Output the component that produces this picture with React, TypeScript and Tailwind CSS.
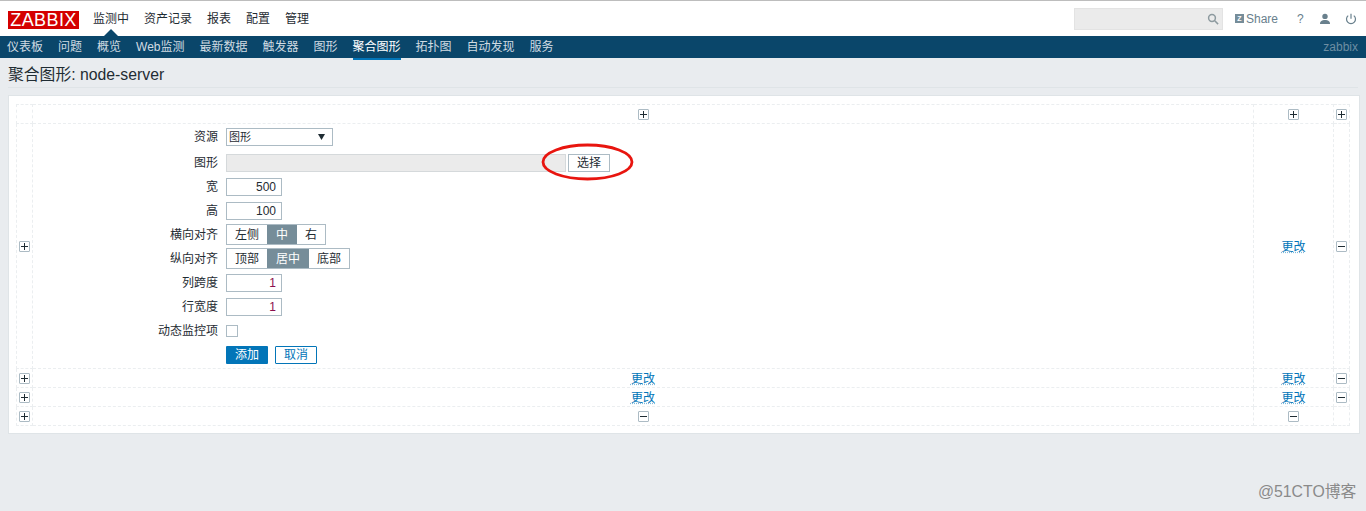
import React from "react";

const font = { fontFamily: '"Liberation Sans","Noto Sans CJK SC",sans-serif' };

function Box({ minus }: { minus?: boolean }) {
  return (
    <span className="inline-flex w-[11px] h-[11px] border border-[#acbbc4] bg-white rounded-[1px] items-center justify-center align-middle relative">
      <span className="block w-[7px] h-[1px] bg-[#1f2c33]" />
      {!minus && <span className="block absolute w-[1px] h-[7px] bg-[#1f2c33]" />}
    </span>
  );
}

const cellB = "border border-dashed border-[#ebeef0] p-0 leading-[14px]";

function Link() {
  return <a className="text-[#0275b8] text-[12px] leading-[14px] underline decoration-dotted decoration-[#0275b880] underline-offset-1">更改</a>;
}

function Row({ label, children, cls }: { label: string; children: React.ReactNode; cls: string }) {
  return (
    <div className={`flex items-center ${cls}`}>
      <div className="w-[193px] pr-[8px] text-right text-[12px] text-[#1f2c33]">{label}</div>
      {children}
    </div>
  );
}

function NumInput({ v, accent }: { v: string; accent?: boolean }) {
  return (
    <div className={`w-[56px] h-[18px] border border-[#acbbc4] bg-white text-right pr-[5px] text-[12px] leading-[16px] ${accent ? "text-[#8b0f4e]" : "text-[#1f2c33]"}`}>
      {v}
    </div>
  );
}

function Seg({ items, widths }: { items: string[]; widths: string[] }) {
  return (
    <div className="flex h-[21px] border border-[#acbbc4] box-border">
      {items.map((t, i) => (
        <div
          key={t}
          className={`${widths[i]} flex items-center justify-center text-[12px] ${i === 1 ? "bg-[#768d99] text-white" : "bg-white text-[#1f2c33]"}`}
        >
          {t}
        </div>
      ))}
    </div>
  );
}

function Form() {
  return (
    <div className="pt-[4px] pb-[4px] relative">
      <Row label="资源" cls="h-[18px]">
        <div className="w-[107px] h-[18px] border border-[#acbbc4] bg-white flex items-center justify-between pl-[2px] pr-[5px] text-[11px] text-[#1f2c33]">
          <span>图形</span>
          <svg width="8" height="6" viewBox="0 0 8 6" className="mr-[1px]"><path d="M0 0h7L3.5 6z" fill="#1f2c33" /></svg>
        </div>
      </Row>
      <Row label="图形" cls="h-[18px] mt-[8px]">
        <div className="w-[340px] h-[18px] border border-[#d5d9db] bg-[#ebebeb]" />
        <div className="ml-[2px] w-[42px] h-[18px] border border-[#acbbc4] bg-white flex items-center justify-center text-[12px] text-[#1f2c33]">选择</div>
      </Row>
      <Row label="宽" cls="h-[18px] mt-[6px]"><NumInput v="500" /></Row>
      <Row label="高" cls="h-[18px] mt-[6px]"><NumInput v="100" /></Row>
      <Row label="横向对齐" cls="h-[21px] mt-[4px]">
        <Seg items={["左侧", "中", "右"]} widths={["w-[40px]", "w-[30px]", "w-[28px]"]} />
      </Row>
      <Row label="纵向对齐" cls="h-[21px] mt-[3px]">
        <Seg items={["顶部", "居中", "底部"]} widths={["w-[40px]", "w-[42px]", "w-[40px]"]} />
      </Row>
      <Row label="列跨度" cls="h-[18px] mt-[5px]"><NumInput v="1" accent /></Row>
      <Row label="行宽度" cls="h-[18px] mt-[6px]"><NumInput v="1" accent /></Row>
      <Row label="动态监控项" cls="h-[12px] mt-[9px]">
        <div className="w-[12px] h-[12px] border border-[#acbbc4] bg-white" />
      </Row>
      <Row label="" cls="h-[18px] mt-[9px]">
        <div className="w-[42px] h-[18px] bg-[#0275b8] text-white text-[12px] flex items-center justify-center rounded-[1px]">添加</div>
        <div className="ml-[7px] w-[42px] h-[18px] border border-[#0275b8] bg-white text-[#0275b8] text-[12px] flex items-center justify-center rounded-[1px]">取消</div>
      </Row>
      <svg className="absolute left-[508px] top-[19px] pointer-events-none" width="94" height="40" viewBox="0 0 94 40">
        <ellipse cx="46.5" cy="19" rx="44.5" ry="17" fill="none" stroke="#e8150f" strokeWidth="2.8" />
      </svg>
    </div>
  );
}

const top = ["监测中", "资产记录", "报表", "配置", "管理"];
const sub = ["仪表板", "问题", "概览", "Web监测", "最新数据", "触发器", "图形", "聚合图形", "拓扑图", "自动发现", "服务"];

export default function App() {
  return (
    <div className="h-[511px] bg-[#e9ecef] overflow-hidden" style={font}>
      <header className="h-[36px] bg-white border-t border-[#bdbdbd] flex items-center">
        <div className="ml-[8px] mt-[2px] w-[71px] h-[18px] bg-[#d40000] text-white text-[18px] leading-[18px] tracking-[0.4px] text-center">ZABBIX</div>
        <nav className="ml-[14px] flex gap-[15px] text-[12px] text-[#1f2c33] relative">
          {top.map((t) => <span key={t}>{t}</span>)}
          <span className="absolute left-[11px] top-[19px] w-0 h-0 border-l-[7px] border-r-[7px] border-b-[7px] border-l-transparent border-r-transparent border-b-[#0a466a]" />
        </nav>
        <div className="ml-auto flex items-center">
          <div className="w-[149px] h-[22px] bg-[#ebebeb] border border-[#e3e3e3] flex items-center justify-end pr-[3px]">
            <svg width="12" height="12" viewBox="0 0 12 12" fill="none" stroke="#8d9a9f" strokeWidth="1.5"><circle cx="5" cy="5" r="3.4" /><path d="M7.5 7.5l3.6 3.6" /></svg>
          </div>
          <div className="ml-[12px] w-[9px] h-[9px] bg-[#768d99] text-white text-[7px] font-bold leading-[9px] text-center">Z</div>
          <span className="ml-[2px] text-[12px] text-[#69808d]">Share</span>
          <span className="ml-[19px] text-[12px] text-[#69808d] w-[7px]">?</span>
          <svg className="ml-[15px]" width="12" height="12" viewBox="0 0 12 12" fill="#69808d"><circle cx="6" cy="3.4" r="2.7" /><path d="M1 11c0-3 2-4 5-4s5 1 5 4z" /></svg>
          <svg className="ml-[14px] mr-[9px]" width="12" height="12" viewBox="0 0 12 12" fill="none" stroke="#69808d" strokeWidth="1.2"><path d="M3.2 2.6a4.5 4.5 0 1 0 5.6 0M6 0.8v5" /></svg>
        </div>
      </header>
      <div className="h-[22px] bg-[#0a466a] flex items-center justify-between pl-[7px] pr-[8px]">
        <nav className="flex gap-[15px] text-[12px] text-[#d0dbe2] h-full">
          {sub.map((t) => (
            <span key={t} className={t === "聚合图形" ? "h-[24px] leading-[22px] text-white border-b-[2px] border-[#0275b8] relative" : "leading-[22px]"}>{t}</span>
          ))}
        </nav>
        <span className="text-[12px] text-[#6d8ea3]">zabbix</span>
      </div>
      <div className="mx-[8px] h-[30px] border-b-[1px] border-[#dfe4e7] text-[15.8px] leading-[34px] text-[#1f2c33]">聚合图形: node-server</div>
      <main className="mx-[8px] mt-[7px] h-[339px] w-[1352px] border border-[#dfe4e7] bg-white pl-[7px] pt-[8px]">
        <table className="border-collapse table-fixed w-[1334px]">
          <colgroup>
            <col className="w-[16px]" />
            <col />
            <col className="w-[80px]" />
            <col className="w-[16px]" />
          </colgroup>
          <tbody>
            <tr className="h-[19px]">
              <td className={cellB} />
              <td className={`${cellB} text-center`}><Box /></td>
              <td className={`${cellB} text-center`}><Box /></td>
              <td className={`${cellB} text-center`}><Box /></td>
            </tr>
            <tr>
              <td className={`${cellB} text-center`}><Box /></td>
              <td className={cellB}><Form /></td>
              <td className={`${cellB} text-center`}><Link /></td>
              <td className={`${cellB} text-center`}><Box minus /></td>
            </tr>
            {[0, 1].map((i) => (
              <tr key={i} className="h-[19px]">
                <td className={`${cellB} text-center`}><Box /></td>
                <td className={`${cellB} text-center`}><Link /></td>
                <td className={`${cellB} text-center`}><Link /></td>
                <td className={`${cellB} text-center`}><Box minus /></td>
              </tr>
            ))}
            <tr className="h-[19px]">
              <td className={`${cellB} text-center`}><Box /></td>
              <td className={`${cellB} text-center`}><Box minus /></td>
              <td className={`${cellB} text-center`}><Box minus /></td>
              <td className={cellB} />
            </tr>
          </tbody>
        </table>
      </main>
      <div className="absolute left-[1258px] top-[483px] text-[15.8px] leading-[18px] text-[#8a8a8a]">@51CTO博客</div>
    </div>
  );
}
